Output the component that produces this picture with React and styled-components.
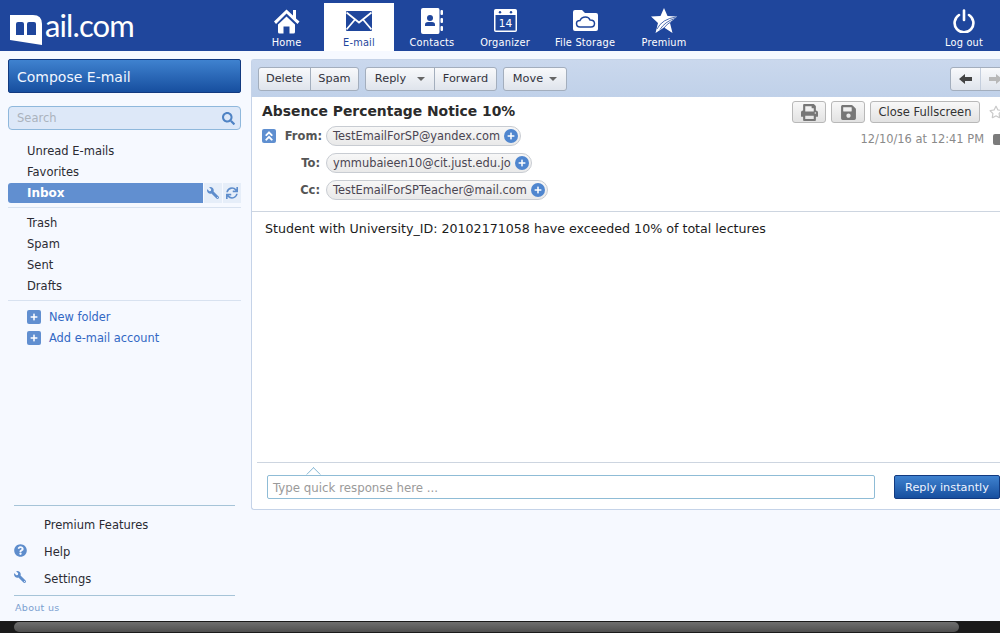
import React from "react";
import styled, { createGlobalStyle } from "styled-components";
import {
  FaPrint,
  FaSave,
  FaQuestionCircle,
  FaWrench,
  FaSearch,
  FaPlus,
  FaSync,
  FaAngleDoubleUp,
  FaRegStar,
} from "react-icons/fa";

const GlobalStyle = createGlobalStyle`
  html, body {
    margin: 0;
    height: 100%;
    overflow: hidden;
    background: #f6f9ff;
    font-family: "DejaVu Sans", Verdana, sans-serif;
  }
  #root { height: 100%; }
  * { box-sizing: border-box; }
`;

const Logo = () => (
  <LogoWrap>
    <svg width="33" height="32" viewBox="0 0 33 32">
      <path d="M0 1 H23 Q32 1 32 10 V31 L0 26 Z" fill="#fff" />
      <path d="M6 21 V10 Q6 8 8 8 H12 Q14 8 14 10 V21 Z" fill="#1f469c" />
      <path d="M17 21 V10 Q17 8 19 8 H24 Q26 8 26 10 V21 Z" fill="#1f469c" />
    </svg>
    <LogoText>ail.com</LogoText>
  </LogoWrap>
);

const HomeIcon = () => (
  <svg width="26" height="26" viewBox="0 0 26 26" fill="#fff">
    <path d="M0 13.5 L12.5 1.5 L19 7.5 V2 H22 V10.5 L25.5 13.5 L23.5 16 L12.5 5.5 L2 16 Z" />
    <path d="M4 16.5 L12.5 8.5 L21 16.5 V24 Q21 25.5 19.5 25.5 H15.5 V18.5 H9.5 V25.5 H5.5 Q4 25.5 4 24 Z" />
  </svg>
);

const EnvelopeIcon = () => (
  <svg width="26" height="20" viewBox="0 0 26 20">
    <rect width="26" height="20" rx="1" fill="#1f469c" />
    <path d="M0.5 1.5 L13 11.5 L25.5 1.5 M0.5 18.5 L9 8.5 M25.5 18.5 L17 8.5" fill="none" stroke="#fff" strokeWidth="1.8" />
  </svg>
);

const ContactsIcon = () => (
  <svg width="22" height="26" viewBox="0 0 22 26" fill="#fff">
    <path d="M2 0 H17 Q18.5 0 18.5 2 V24 Q18.5 26 17 26 H2 Q0 26 0 24 V2 Q0 0 2 0 Z" />
    <rect x="19.5" y="2" width="2.5" height="5" rx="1" />
    <rect x="19.5" y="10" width="2.5" height="5" rx="1" />
    <rect x="19.5" y="18" width="2.5" height="5" rx="1" />
    <circle cx="9" cy="10" r="3" fill="#1f469c" />
    <path d="M4 18 V16.5 Q4 14 7 14 H11 Q14 14 14 16.5 V18 Z" fill="#1f469c" />
  </svg>
);

const OrganizerIcon = () => (
  <svg width="23" height="23" viewBox="0 0 23 23">
    <rect x="0.75" y="0.75" width="21.5" height="21.5" rx="1" fill="none" stroke="#fff" strokeWidth="1.5" />
    <rect x="1" y="1" width="21" height="5" fill="#fff" />
    <circle cx="6" cy="3.2" r="1.2" fill="#1f469c" />
    <circle cx="17" cy="3.2" r="1.2" fill="#1f469c" />
    <text x="11.5" y="17.5" fontSize="10.5" textAnchor="middle" fill="#fff" fontFamily="DejaVu Sans">14</text>
  </svg>
);

const StorageIcon = () => (
  <svg width="25" height="21" viewBox="0 0 25 21">
    <path d="M2 0 H9 L12 3 H23 Q25 3 25 5 V19 Q25 21 23 21 H2 Q0 21 0 19 V2 Q0 0 2 0 Z" fill="#fff" />
    <path d="M7 17 Q3.5 17 3.5 13.5 Q3.5 10.5 7 10.5 Q8.5 7 12.5 7 Q16 7 17 10 Q21.5 10 21.5 13.5 Q21.5 17 18 17 Z" fill="#fff" stroke="#1f469c" strokeWidth="1.5" />
  </svg>
);

const PremiumIcon = () => (
  <svg width="26" height="25" viewBox="0 0 26 25">
    <path d="M13 0 L16.5 8 L26 8.5 L19 15 L21.5 25 L13 19.5 L4.5 25 L7 15 L0 8.5 L9.5 8 Z" fill="#fff" />
    <path d="M6 21 Q11 11 25 9 M9 21.5 Q14 13.5 24 10.5 M12 21 Q16 15.5 22 12.5" stroke="#1f469c" strokeWidth="0.8" fill="none" />
  </svg>
);

const PowerIcon = () => (
  <svg width="22" height="24" viewBox="0 0 22 24" fill="none" stroke="#fff" strokeWidth="2.6" strokeLinecap="round">
    <path d="M6 6 A9.4 9.4 0 1 0 16 6" />
    <path d="M11 1.5 V11" />
  </svg>
);

const LeftArrow = () => (
  <svg width="13" height="10" viewBox="0 0 13 10" fill="#444">
    <path d="M0 5 L6 0 V3 H13 V7 H6 V10 Z" />
  </svg>
);

const RightArrow = () => (
  <svg width="13" height="10" viewBox="0 0 13 10" fill="#b8b8b8">
    <path d="M13 5 L7 0 V3 H0 V7 H7 V10 Z" />
  </svg>
);

const navItems = [
  { label: "Home", width: 75, icon: <HomeIcon /> },
  { label: "E-mail", width: 70, active: true, icon: <EnvelopeIcon /> },
  { label: "Contacts", width: 76, icon: <ContactsIcon /> },
  { label: "Organizer", width: 70, icon: <OrganizerIcon /> },
  { label: "File Storage", width: 90, icon: <StorageIcon /> },
  { label: "Premium", width: 68, icon: <PremiumIcon /> },
];

const topFolders = ["Unread E-mails", "Favorites"];
const otherFolders = ["Trash", "Spam", "Sent", "Drafts"];

const recipients = [
  { label: "From:", email: "TestEmailForSP@yandex.com", first: true },
  { label: "To:", email: "ymmubaieen10@cit.just.edu.jo" },
  { label: "Cc:", email: "TestEmailForSPTeacher@mail.com" },
];

export default function App() {
  return (
    <Page>
      <GlobalStyle />
      <Header>
        <Logo />
        <Nav>
          {navItems.map(item => (
            <NavItem key={item.label} $active={item.active} $width={item.width}>
              <NavIcon>{item.icon}</NavIcon>
              <NavLabel>{item.label}</NavLabel>
            </NavItem>
          ))}
        </Nav>
        <LogoutItem>
          <NavIcon><PowerIcon /></NavIcon>
          <NavLabel>Log out</NavLabel>
        </LogoutItem>
      </Header>

      <Body>
        <Sidebar>
          <Compose>Compose E-mail</Compose>
          <SearchBox>
            <span>Search</span>
            <FaSearch size={13} color="#4f83c4" />
          </SearchBox>
          <FolderList $first>
            {topFolders.map(f => <Folder key={f}>{f}</Folder>)}
            <InboxRow>
              <InboxLabel>Inbox</InboxLabel>
              <InboxTool><FlippedWrench size={12} /></InboxTool>
              <InboxTool><FaSync size={12} /></InboxTool>
            </InboxRow>
          </FolderList>
          <FolderList $divided>
            {otherFolders.map(f => <Folder key={f}>{f}</Folder>)}
          </FolderList>
          <FolderList $divided $tight>
            <AddLink><PlusSquare><FaPlus size={8} /></PlusSquare>New folder</AddLink>
            <AddLink><PlusSquare><FaPlus size={8} /></PlusSquare>Add e-mail account</AddLink>
          </FolderList>
          <SideFooter>
            <FooterRow>Premium Features</FooterRow>
            <FooterRow><FooterIcon><FaQuestionCircle size={13} /></FooterIcon>Help</FooterRow>
            <FooterRow><FooterIcon><FlippedWrench size={12} /></FooterIcon>Settings</FooterRow>
            <AboutUs>About us</AboutUs>
          </SideFooter>
        </Sidebar>

        <Main>
          <Toolbar>
            <BtnGroup>
              <ToolBtn $width={51}>Delete</ToolBtn>
              <ToolBtn $width={48}>Spam</ToolBtn>
            </BtnGroup>
            <BtnGroup>
              <ToolBtn $width={68}>Reply<Caret $gap={11} /></ToolBtn>
              <ToolBtn $width={62}>Forward</ToolBtn>
            </BtnGroup>
            <BtnGroup>
              <ToolBtn $width={62}>Move<Caret $gap={6} /></ToolBtn>
            </BtnGroup>
            <PagerGroup>
              <PagerBtn><LeftArrow /></PagerBtn>
              <PagerBtn><RightArrow /></PagerBtn>
            </PagerGroup>
          </Toolbar>

          <MailHead>
            <HeadLeft>
              <Subject>Absence Percentage Notice 10%</Subject>
              {recipients.map(r => (
                <RecipientRow key={r.label}>
                  <CollapseSlot>
                    {r.first && <Collapse><FaAngleDoubleUp size={12} /></Collapse>}
                  </CollapseSlot>
                  <RecipientLabel $first={r.first}>{r.label}</RecipientLabel>
                  <Chip>
                    {r.email}
                    <ChipPlus><FaPlus size={8} /></ChipPlus>
                  </Chip>
                </RecipientRow>
              ))}
            </HeadLeft>
            <HeadRight>
              <HeadActions>
                <IconBtn><FaPrint size={17} /></IconBtn>
                <IconBtn><FaSave size={17} /></IconBtn>
                <CloseBtn>Close Fullscreen</CloseBtn>
                <Star><FaRegStar size={14} /></Star>
              </HeadActions>
              <DateRow>
                12/10/16 at 12:41 PM
                <MiniBadge />
              </DateRow>
            </HeadRight>
          </MailHead>

          <MailBody>Student with University_ID: 20102171058 have exceeded 10% of total lectures</MailBody>

          <QuickReply>
            <QuickInput>
              <Notch />
              Type quick response here ...
            </QuickInput>
            <ReplyBtn>Reply instantly</ReplyBtn>
          </QuickReply>
        </Main>
      </Body>

      <ScrollTrack>
        <ScrollThumb />
      </ScrollTrack>
    </Page>
  );
}

const FlippedWrench = styled(FaWrench)`
  transform: scaleX(-1);
`;

const Page = styled.div`
  display: flex;
  flex-direction: column;
  width: 1000px;
  height: 633px;
  overflow: hidden;
`;

const Header = styled.header`
  display: flex;
  flex: none;
  height: 51px;
  background: #1f469c;
  color: #fff;
`;

const LogoWrap = styled.div`
  display: flex;
  flex: none;
  align-items: flex-start;
  width: 249px;
  padding: 14px 0 0 10px;
`;

const LogoText = styled.span`
  margin: -7px 0 0 2px;
  font-family: Lato, sans-serif;
  font-size: 31px;
  font-weight: 400;
  line-height: 36px;
  letter-spacing: -0.9px;
  color: #fff;
`;

const Nav = styled.nav`
  display: flex;
  padding-top: 3px;
`;

const NavItem = styled.div`
  display: flex;
  flex-direction: column;
  align-items: center;
  width: ${p => p.$width}px;
  background: ${p => (p.$active ? "#fff" : "transparent")};
  color: ${p => (p.$active ? "#1f469c" : "#fff")};
`;

const NavIcon = styled.div`
  display: flex;
  align-items: center;
  justify-content: center;
  height: 32px;
  padding-top: 3px;
`;

const NavLabel = styled.div`
  margin-top: 2px;
  font-size: 9.8px;
  line-height: 12px;
  letter-spacing: 0.2px;
  white-space: nowrap;
`;

const LogoutItem = styled.div`
  display: flex;
  flex-direction: column;
  align-items: center;
  width: 72px;
  margin-left: auto;
  padding-top: 3px;
`;

const Body = styled.div`
  display: flex;
  flex: 1;
  min-height: 0;
`;

const Sidebar = styled.aside`
  display: flex;
  flex: none;
  flex-direction: column;
  width: 251px;
  padding: 8px 10px 0 8px;
`;

const Compose = styled.button`
  height: 34px;
  padding: 1px 8px 0;
  border: 1px solid #123a80;
  border-radius: 2px;
  background: linear-gradient(#3f82cf, #174f9f);
  color: #f2f6ff;
  font: 14px "DejaVu Sans", sans-serif;
  text-align: left;
`;

const SearchBox = styled.div`
  display: flex;
  align-items: center;
  justify-content: space-between;
  height: 24px;
  margin-top: 13px;
  padding: 0 5px 0 8px;
  border: 1px solid #8fb8dc;
  border-radius: 4px;
  background: #dde8f8;
  color: #abb3bd;
  font-size: 11.5px;
`;

const FolderList = styled.div`
  display: flex;
  flex-direction: column;
  ${p => p.$first && "margin-top: 11px;"}
  ${p => p.$divided && `margin-top: ${p.$tight ? 3 : 4}px; padding-top: 5px; border-top: 1px solid #d8e2f0;`}
`;

const Folder = styled.div`
  height: 21px;
  padding-left: 19px;
  color: #2b2b33;
  font-size: 11.5px;
  line-height: 21px;
`;

const InboxRow = styled.div`
  display: flex;
  gap: 1px;
  height: 20px;
`;

const InboxLabel = styled.div`
  flex: 1;
  padding-left: 19px;
  border-radius: 3px 0 0 3px;
  background: #618fd0;
  color: #fff;
  font-size: 12px;
  font-weight: bold;
  line-height: 20px;
`;

const InboxTool = styled.div`
  display: flex;
  align-items: center;
  justify-content: center;
  width: 18px;
  background: #e6eef9;
  color: #5e8dcc;
`;

const AddLink = styled.div`
  display: flex;
  align-items: center;
  height: 21px;
  padding-left: 19px;
  color: #3268c4;
  font-size: 11.4px;
`;

const PlusSquare = styled.span`
  display: flex;
  align-items: center;
  justify-content: center;
  width: 14px;
  height: 14px;
  margin-right: 8px;
  border-radius: 2px;
  background: #618fd0;
  color: #fff;
`;

const SideFooter = styled.div`
  display: flex;
  flex-direction: column;
  margin: auto 6px 0 6px;
  padding-top: 6px;
  border-top: 1px solid #a6c4d8;
`;

const FooterRow = styled.div`
  position: relative;
  height: 27px;
  padding-left: 30px;
  color: #2b2b33;
  font-size: 11.5px;
  line-height: 27px;
`;

const FooterIcon = styled.span`
  position: absolute;
  left: 0;
  top: 5px;
  display: flex;
  color: #5e8dcc;
`;

const AboutUs = styled.div`
  height: 26px;
  margin-top: 2px;
  padding: 6px 0 0 1px;
  border-top: 1px solid #a6c4d8;
  color: #7ba0d0;
  font-size: 9.5px;
  letter-spacing: 0.3px;
`;

const Main = styled.main`
  display: flex;
  flex: none;
  flex-direction: column;
  width: 749px;
  height: 451px;
  margin-top: 8px;
  border: 1px solid #c5d3e8;
  border-right: 0;
  border-radius: 3px 0 0 3px;
  background: #fff;
`;

const Toolbar = styled.div`
  display: flex;
  flex: none;
  align-items: center;
  gap: 6px;
  height: 37px;
  padding-left: 6px;
  background: linear-gradient(#cad8ed, #c0d1e9);
`;

const BtnGroup = styled.div`
  display: flex;
  height: 24px;
  border: 1px solid #a3aebd;
  border-radius: 3px;
  background: linear-gradient(#f8f9fb, #dfe4ec);
`;

const ToolBtn = styled.div`
  display: flex;
  align-items: center;
  justify-content: center;
  width: ${p => p.$width}px;
  color: #33333d;
  font-size: 11.3px;
  & + & { border-left: 1px solid #a3aebd; }
`;

const Caret = styled.span`
  width: 0;
  height: 0;
  margin-left: ${p => p.$gap}px;
  border: 4px solid transparent;
  border-top-color: #666;
  border-bottom: 0;
`;

const PagerGroup = styled(BtnGroup)`
  margin-left: auto;
  margin-right: -10px;
`;

const PagerBtn = styled.div`
  display: flex;
  align-items: center;
  justify-content: center;
  width: 29px;
  & + & { border-left: 1px solid #c4cedd; }
`;

const MailHead = styled.div`
  display: flex;
  flex: none;
  justify-content: space-between;
  height: 115px;
  padding: 4px 0 0 10px;
  border-bottom: 1px solid #cdd5e0;
`;

const HeadLeft = styled.div`
  display: flex;
  flex-direction: column;
`;

const Subject = styled.h1`
  margin: 0;
  color: #2b2b2b;
  font-size: 13.9px;
  font-weight: bold;
  line-height: 21px;
`;

const RecipientRow = styled.div`
  display: flex;
  align-items: center;
  height: 27px;
`;

const CollapseSlot = styled.div`
  flex: none;
  width: 14px;
`;

const Collapse = styled.div`
  display: flex;
  align-items: center;
  justify-content: center;
  width: 14px;
  height: 14px;
  border-radius: 2px;
  background: #5f8fd0;
  color: #fff;
`;

const RecipientLabel = styled.div`
  width: 50px;
  padding-right: ${p => (p.$first ? 4 : 6)}px;
  color: #555;
  font-size: 11.5px;
  font-weight: bold;
  text-align: right;
`;

const Chip = styled.div`
  display: flex;
  align-items: center;
  height: 20px;
  padding: 0 2px 0 6px;
  border: 1px solid #c8ccd2;
  border-radius: 10px;
  background: linear-gradient(#f7f7f7, #e9e9e9);
  color: #4a4552;
  font-size: 11.4px;
  white-space: nowrap;
`;

const ChipPlus = styled.span`
  display: flex;
  align-items: center;
  justify-content: center;
  width: 14px;
  height: 14px;
  margin-left: 4px;
  border-radius: 50%;
  background: #4f86cf;
  color: #fff;
`;

const HeadRight = styled.div`
  display: flex;
  flex-direction: column;
  align-items: flex-end;
  width: 220px;
`;

const HeadActions = styled.div`
  display: flex;
  align-items: center;
  gap: 5px;
  width: 240px;
  margin-right: -32px;
`;

const IconBtn = styled.div`
  display: flex;
  align-items: center;
  justify-content: center;
  width: 34px;
  height: 22px;
  border: 1px solid #b8b8b8;
  border-radius: 3px;
  background: linear-gradient(#f8f8f8, #e2e2e2);
  color: #777;
`;

const CloseBtn = styled.div`
  display: flex;
  align-items: center;
  justify-content: center;
  width: 110px;
  height: 22px;
  border: 1px solid #b8b8b8;
  border-radius: 3px;
  background: linear-gradient(#f8f8f8, #e2e2e2);
  color: #333;
  font-size: 11.5px;
  white-space: nowrap;
`;

const Star = styled.span`
  display: flex;
  margin-left: 4px;
  color: #c9c9c9;
`;

const DateRow = styled.div`
  display: flex;
  align-items: center;
  margin-top: 9px;
  color: #8a8a8a;
  font-size: 11.45px;
  white-space: nowrap;
`;

const MiniBadge = styled.span`
  width: 8px;
  height: 11px;
  margin: 0 -1px 0 9px;
  border-radius: 2px 0 0 2px;
  background: #7b7b7b;
`;

const MailBody = styled.div`
  flex: 1;
  padding: 9px 0 0 13px;
  color: #1c1c1c;
  font-size: 12.65px;
  line-height: 16px;
`;

const QuickReply = styled.div`
  display: flex;
  flex: none;
  justify-content: space-between;
  height: 47px;
  margin-left: 5px;
  padding: 12px 0 0 10px;
  border-top: 1px solid #cdd5e0;
`;

const QuickInput = styled.div`
  position: relative;
  width: 608px;
  height: 24px;
  padding: 1px 0 0 5px;
  border: 1px solid #8fbcd6;
  border-radius: 2px;
  color: #9a9a9a;
  font-size: 11.8px;
  line-height: 22px;
`;

const Notch = styled.span`
  position: absolute;
  left: 40px;
  top: -7px;
  width: 11px;
  height: 11px;
  border-left: 1px solid #8fbcd6;
  border-top: 1px solid #8fbcd6;
  background: #fff;
  clip-path: polygon(0 0, 100% 0, 0 100%);
  transform: rotate(45deg);
`;

const ReplyBtn = styled.div`
  width: 106px;
  height: 24px;
  padding-top: 1px;
  border: 1px solid #123a80;
  border-radius: 2px;
  background: linear-gradient(#3f82cf, #174f9f);
  color: #eef4ff;
  font-size: 11.3px;
  line-height: 22px;
  text-align: center;
`;

const ScrollTrack = styled.div`
  flex: none;
  height: 12px;
  padding: 1px 41px 1px 14px;
  background: #1a1a1a;
`;

const ScrollThumb = styled.div`
  height: 10px;
  border-radius: 5px;
  background: linear-gradient(#6f6f6f, #4f4f4f);
`;
